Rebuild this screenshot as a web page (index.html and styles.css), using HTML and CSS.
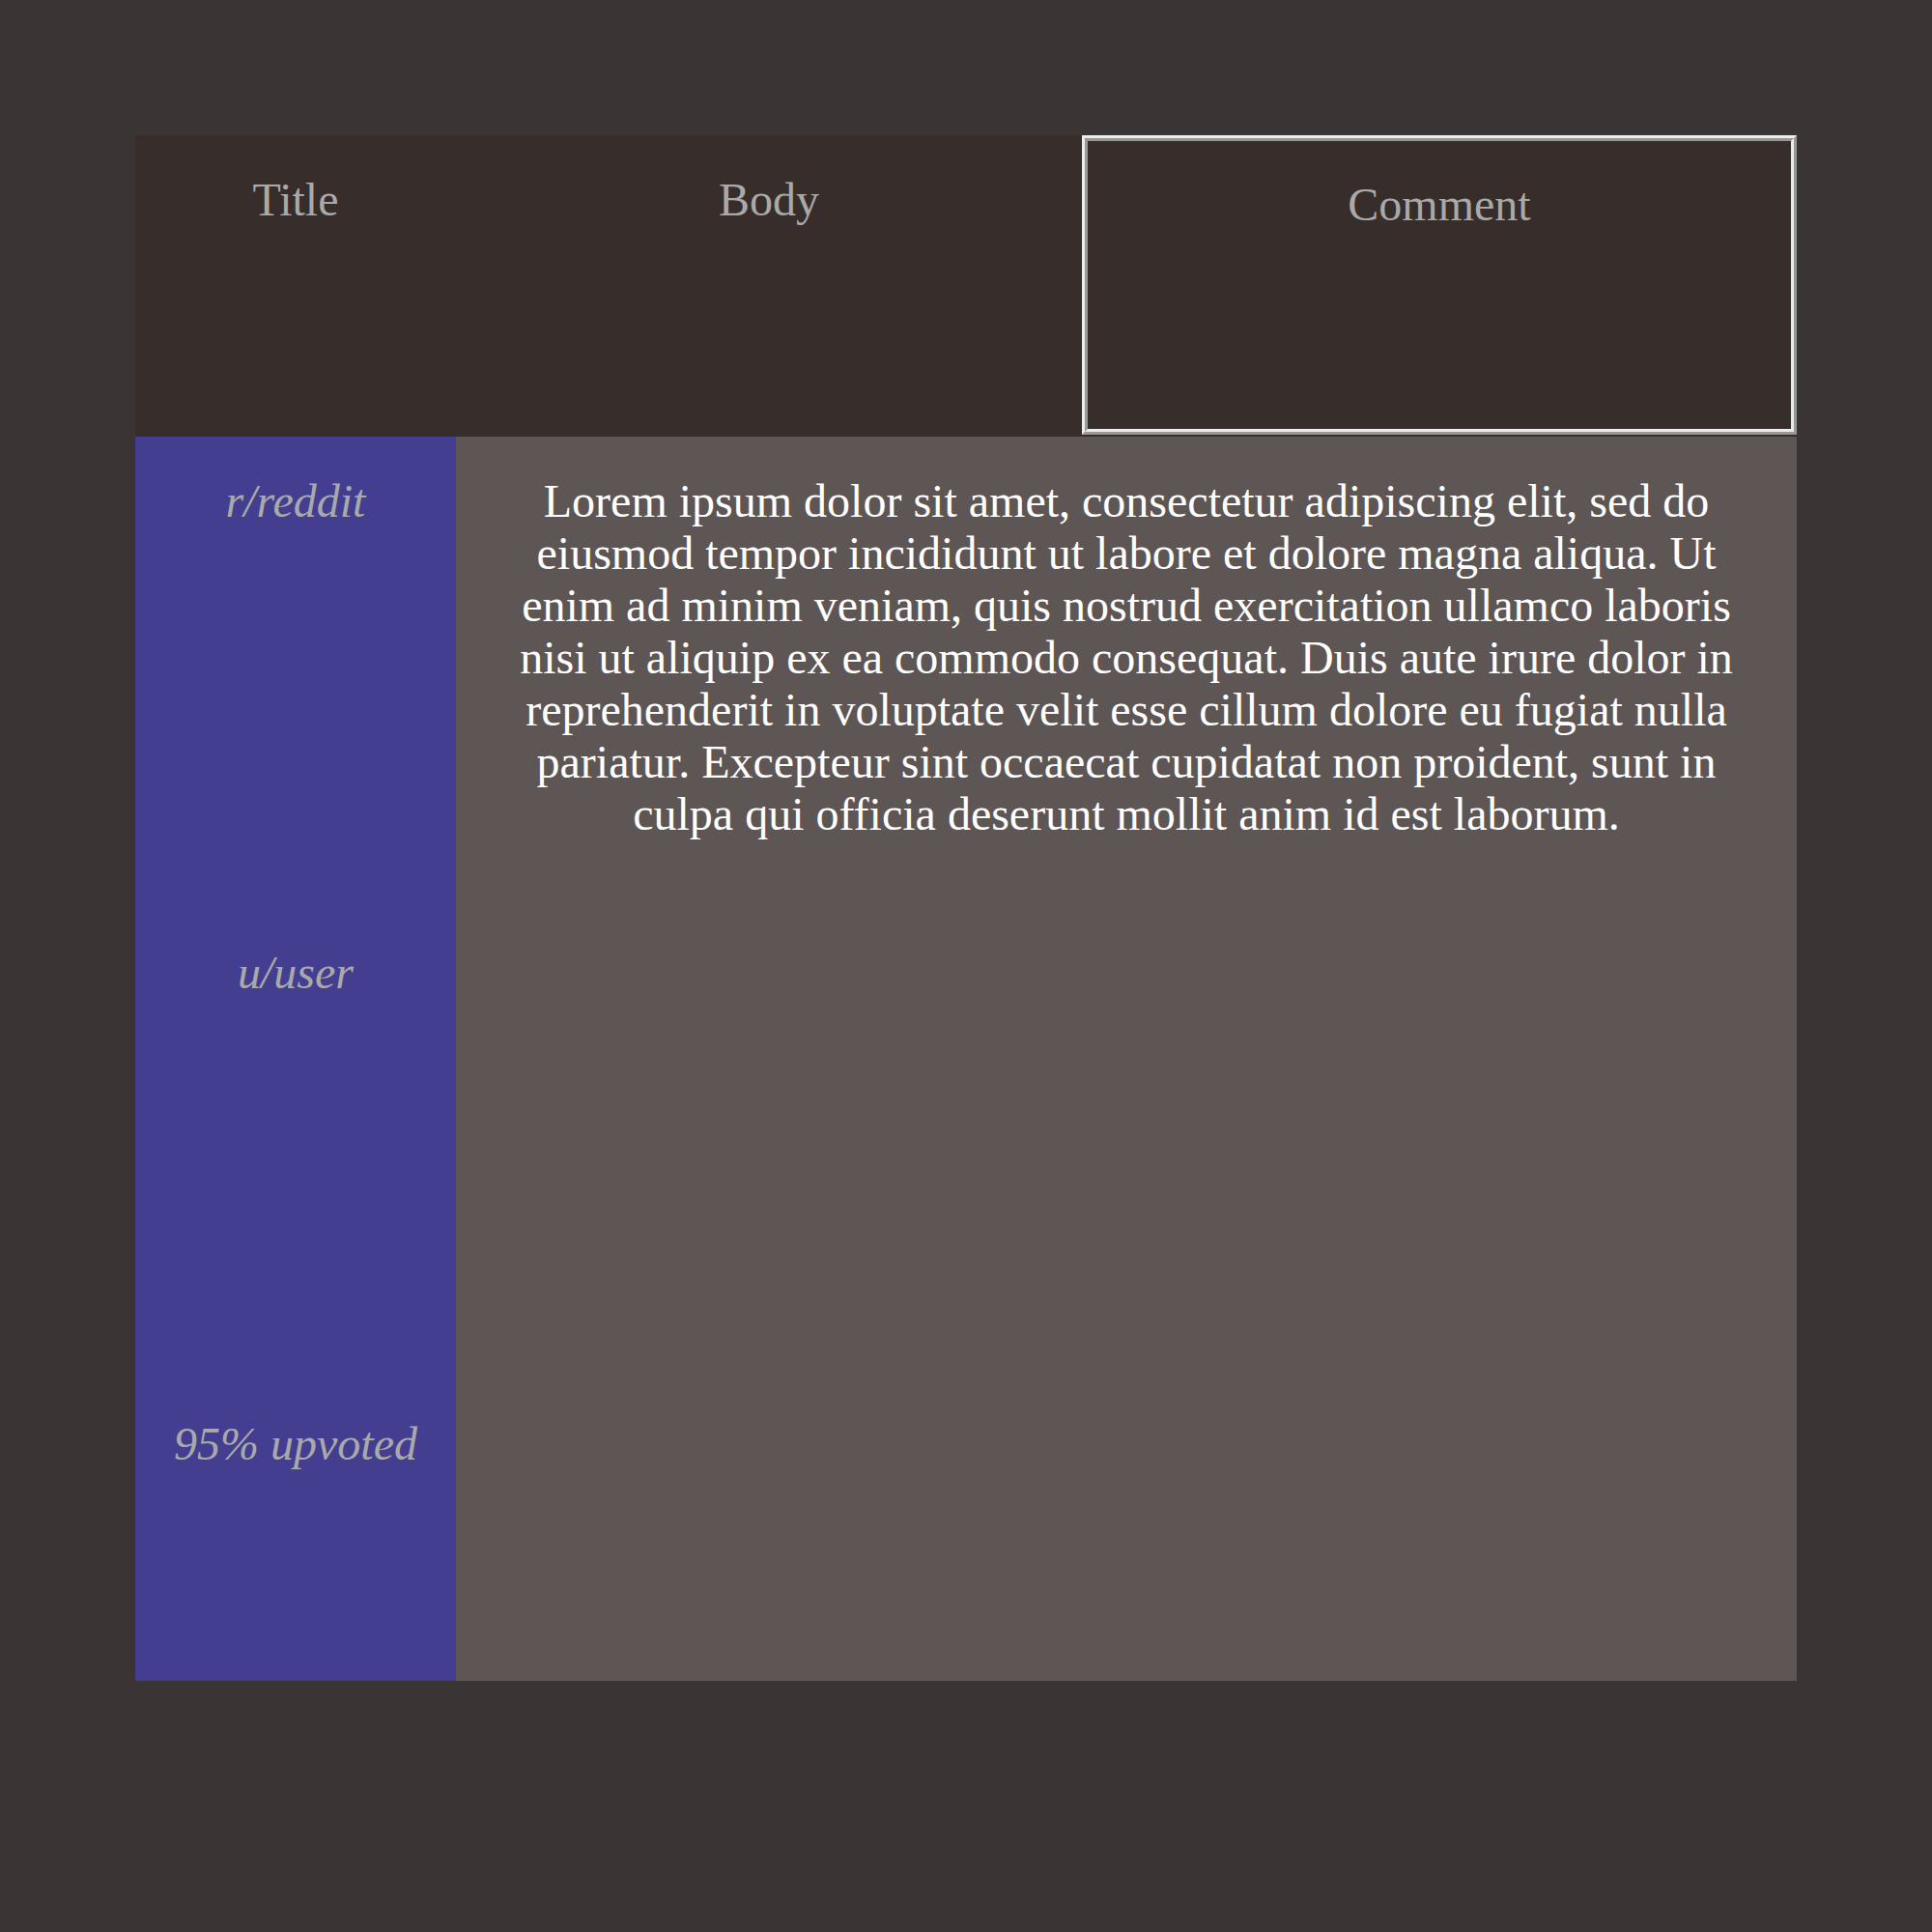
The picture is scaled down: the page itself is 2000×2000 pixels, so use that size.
FILE: index.html
```html
<!DOCTYPE html>
<html lang="en">
<head>
  <meta charset="UTF-8">
  <title>Post</title>
  <link rel="stylesheet" href="styles.css">
</head>
<body>
  <div class="post">
    <div class="post-head">
      <div class="head-cell head-title">Title</div>
      <div class="head-cell head-body">Body</div>
      <div class="head-cell head-comment">Comment</div>
    </div>
    <div class="post-main">
      <div class="meta">
        <div class="meta-item">r/reddit</div>
        <div class="meta-item">u/user</div>
        <div class="meta-item">95% upvoted</div>
      </div>
      <div class="content">
        <p>Lorem ipsum dolor sit amet, consectetur adipiscing elit, sed do eiusmod tempor incididunt ut labore et dolore magna aliqua. Ut enim ad minim veniam, quis nostrud exercitation ullamco laboris nisi ut aliquip ex ea commodo consequat. Duis aute irure dolor in reprehenderit in voluptate velit esse cillum dolore eu fugiat nulla pariatur. Excepteur sint occaecat cupidatat non proident, sunt in culpa qui officia deserunt mollit anim id est laborum.</p>
      </div>
    </div>
  </div>
</body>
</html>
```

FILE: styles.css
```css
body {
  margin: 0;
  padding: 140px;
  background-color: #3a3534;
  font-family: "Liberation Serif", "Times New Roman", serif;
  font-size: 48px;
  line-height: 54px;
}
.post {
  width: 1720px;
}
.post-head {
  display: flex;
  height: 312px;
  background-color: #372d2b;
  color: #a9a9a9;
}
.head-cell {
  padding: 40px 0;
  text-align: center;
  box-sizing: border-box;
}
.head-title {
  width: 332px;
}
.head-body {
  width: 648px;
}
.head-comment {
  width: 740px;
  height: 310px;
  border: 6px ridge #ececec;
  padding-top: 39px;
}
.post-main {
  display: flex;
  height: 1288px;
}
.meta {
  width: 332px;
  padding: 40px 0;
  box-sizing: border-box;
  background-color: #443e91;
  color: #a9a9a9;
  font-style: italic;
  text-align: center;
  display: flex;
  flex-direction: column;
  gap: 434px;
}
.content {
  flex: 1;
  padding: 40px;
  background-color: #5e5654;
  color: #fff;
  text-align: center;
}
.content p {
  margin: 0;
}
```
